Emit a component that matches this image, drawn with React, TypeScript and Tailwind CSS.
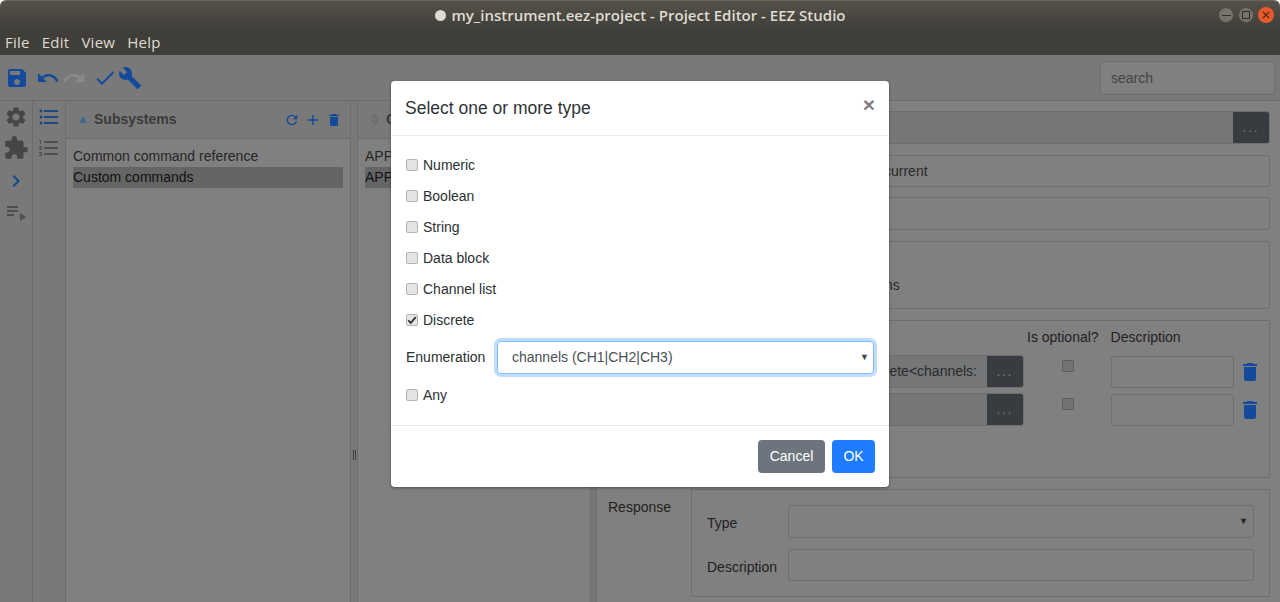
import {
  MdAdd,
  MdBuild,
  MdCheck,
  MdChevronRight,
  MdClose,
  MdDelete,
  MdExtension,
  MdFormatListBulleted,
  MdFormatListNumbered,
  MdPlaylistPlay,
  MdRedo,
  MdRefresh,
  MdSave,
  MdSettings,
  MdUndo,
} from "react-icons/md";

const types = ["Numeric", "Boolean", "String", "Data block", "Channel list"];

const Check = ({ checked = false }: { checked?: boolean }) => (
  <span className="w-[12px] h-[12px] mb-[1px] rounded-[2px] border border-[#b4b4b4] bg-[#e4e4e4] flex items-center justify-center shrink-0">
    {checked && (
      <svg viewBox="0 0 12 12" className="w-[10px] h-[10px] text-[#333]">
        <path d="M1.5 6.5 L4.5 9.5 L10.5 2.5" fill="none" stroke="currentColor" strokeWidth="2.2" />
      </svg>
    )}
  </span>
);

const TypeRow = ({ label, checked, className = "" }: { label: string; checked?: boolean; className?: string }) => (
  <div className={"h-[21px] flex items-center gap-[5px] text-[14px] text-[#2b2f33] " + className}>
    <Check checked={checked} />
    <span>{label}</span>
  </div>
);

const DimInput = ({ className = "", children }: { className?: string; children?: React.ReactNode }) => (
  <div className={"border border-[#6e6e6e] rounded-[3px] flex items-center px-[12px] text-[14px] text-[#2a2a2a] overflow-hidden whitespace-nowrap " + className}>
    {children}
  </div>
);

const PickerInput = ({ className = "", children }: { className?: string; children?: React.ReactNode }) => (
  <div className={"flex rounded-[3px] border border-[#6e6e6e] overflow-hidden " + className}>
    <div className="flex-1 bg-[#747678] flex items-center justify-end pr-[10px] text-[14px] text-[#2a2a2a] whitespace-nowrap overflow-hidden">
      {children}
    </div>
    <div className="w-[36px] bg-[#383b3f] text-[#858585] text-[13px] tracking-[2px] flex items-center justify-center">...</div>
  </div>
);

const ParamRow = ({ value }: { value?: string }) => (
  <div className="flex h-[33px]">
    <PickerInput className="w-[331px] h-[33px]">{value}</PickerInput>
    <div className="w-[87px] flex justify-center pt-[5px]">
      <span className="w-[12px] h-[12px] rounded-[2px] border border-[#5c5c5c] bg-[#737373] block" />
    </div>
    <DimInput className="w-[123px] h-[32px] mt-[1px]" />
    <MdDelete className="text-[#134a9c] w-[24px] h-[24px] ml-[4px] mt-[5px]" />
  </div>
);

const App = () => {
  return (
    <div className="relative w-[1280px] h-[602px] overflow-hidden flex flex-col bg-white font-['Liberation_Sans',sans-serif]">
      {/* Window title + menu */}
      <div className="h-[28px] shrink-0 bg-gradient-to-b from-[#56524a] to-[#403f3a] border-t border-[#6a665d] rounded-t-[6px] flex items-center pt-[1px]">
        <div className="flex-1 flex items-center justify-center gap-[6px] pl-[62px] font-['Open_Sans',sans-serif] font-semibold text-[15px] text-[#dfdbd2]">
          <span className="w-[11px] h-[11px] rounded-full bg-[#dfdbd2]" />
          <span>my_instrument.eez-project - Project Editor - EEZ Studio</span>
        </div>
        <div className="flex items-center gap-[4px] pr-[6px]">
          <span className="w-[16px] h-[16px] rounded-full bg-[#77736c] border border-[#4d4a44] flex items-center justify-center">
            <span className="w-[9px] h-[1px] bg-[#2f2e2a]" />
          </span>
          <span className="w-[16px] h-[16px] rounded-full bg-[#77736c] border border-[#4d4a44] flex items-center justify-center">
            <span className="w-[8px] h-[8px] border border-[#2f2e2a]" />
          </span>
          <span className="w-[16px] h-[16px] rounded-full bg-[#e9592a] flex items-center justify-center">
            <MdClose className="w-[12px] h-[12px] text-[#3a2015]" />
          </span>
        </div>
      </div>
      <div className="h-[27px] shrink-0 bg-[#3f3e39] flex items-center gap-[12px] pl-[5px] pt-[2px] font-['Open_Sans',sans-serif] text-[15px] tracking-[0.25px] text-[#dfdbd2]">
        <span>File</span>
        <span>Edit</span>
        <span>View</span>
        <span>Help</span>
      </div>

      {/* Toolbar */}
      <div className="h-[46px] shrink-0 bg-[#797979] border-b border-[#6d6d6d] flex items-center pl-[5px] pr-[5px]">
        <MdSave className="w-[24px] h-[24px] text-[#134a9c]" />
        <MdUndo className="w-[24px] h-[24px] text-[#134a9c] ml-[7px]" />
        <MdRedo className="w-[24px] h-[24px] text-[#8a8a8a] ml-[2px]" />
        <MdCheck className="w-[24px] h-[24px] text-[#134a9c] ml-[7px]" />
        <MdBuild className="w-[24px] h-[24px] text-[#134a9c] ml-[1px]" />
        <div className="ml-auto w-[175px] h-[34px] rounded-[3px] border border-[#6e6e6e] bg-[#808080] flex items-center pl-[10px] pt-[1px] text-[14px] text-[#444]">
          search
        </div>
      </div>

      <div className="flex-1 flex min-h-0 bg-[#808080]">
        {/* Rails */}
        <div className="w-[33px] shrink-0 bg-[#797979] border-r border-[#6d6d6d] flex flex-col items-center pt-[4px] gap-[6px]">
          <MdSettings className="w-[24px] h-[24px] text-[#464646]" />
          <MdExtension className="w-[26px] h-[26px] text-[#464646]" />
          <MdChevronRight className="w-[24px] h-[24px] text-[#134a8c] mt-[2px]" />
          <MdPlaylistPlay className="w-[24px] h-[24px] text-[#4e4e4e] mt-[1px]" />
        </div>
        <div className="w-[33px] shrink-0 bg-[#797979] border-r border-[#6d6d6d] flex flex-col items-center pt-[4px] gap-[7px]">
          <MdFormatListBulleted className="w-[24px] h-[24px] text-[#1a4a80]" />
          <MdFormatListNumbered className="w-[24px] h-[24px] text-[#505050]" />
        </div>

        {/* Subsystems */}
        <div className="w-[284px] shrink-0 flex flex-col">
          <div className="h-[38px] bg-[#797979] border-b border-[#6d6d6d] flex items-center pl-[13px] pr-[8px]">
            <span className="w-0 h-0 border-x-[4px] border-x-transparent border-b-[7px] border-b-[#41688f]" />
            <span className="ml-[7px] font-bold text-[14px] text-[#3a3a3a]">Subsystems</span>
            <div className="ml-auto flex items-center gap-[4px]">
              <MdRefresh className="w-[16px] h-[16px] text-[#134a9c]" />
              <MdAdd className="w-[18px] h-[18px] text-[#134a9c]" />
              <MdDelete className="w-[16px] h-[16px] text-[#134a9c]" />
            </div>
          </div>
          <div className="pl-[7px] pr-[7px] pt-[7px] text-[14px] text-[#262626] leading-[21px]">
            <div>Common command reference</div>
            <div className="bg-[#656565] text-[#111]">Custom commands</div>
          </div>
        </div>

        {/* Splitter */}
        <div className="w-[8px] shrink-0 bg-[#797979] border-x border-[#6d6d6d] flex items-center justify-center">
          <div className="flex gap-[1px] mt-[207px]">
            <span className="w-[1px] h-[10px] bg-[#3f3f3f]" />
            <span className="w-[1px] h-[10px] bg-[#3f3f3f]" />
          </div>
        </div>

        {/* Commands */}
        <div className="w-[232px] shrink-0 flex flex-col">
          <div className="h-[38px] bg-[#797979] border-b border-[#6d6d6d] flex items-center pl-[13px]">
            <div className="flex flex-col gap-[1px]">
              <span className="w-0 h-0 border-x-[4px] border-x-transparent border-b-[6px] border-b-[#6f6f6f]" />
              <span className="w-0 h-0 border-x-[4px] border-x-transparent border-t-[6px] border-t-[#6f6f6f]" />
            </div>
            <span className="ml-[7px] font-bold text-[14px] text-[#3a3a3a]">Commands</span>
          </div>
          <div className="pl-[7px] pr-[7px] pt-[7px] text-[14px] text-[#262626] leading-[21px]">
            <div>APPLy</div>
            <div className="bg-[#656565] text-[#111]">APPLy?</div>
          </div>
        </div>

        <div className="w-[7px] shrink-0 bg-[#767676] border-x border-[#6d6d6d]" />

        {/* Command form */}
        <div className="flex-1 min-w-0 pt-[10px] pl-[94px] pr-[10px] relative">
          <PickerInput className="h-[33px]" />
          <DimInput className="h-[32px] mt-[11px]">
            <span className="pl-[180px]">current</span>
          </DimInput>
          <DimInput className="h-[33px] mt-[10px]" />
          <DimInput className="h-[68px] mt-[11px] items-end pb-[12px]">
            <span className="pl-[181px]">ns</span>
          </DimInput>
          <div className="h-[158px] mt-[11px] border border-[#6e6e6e] pt-[6px] pl-[10px]">
            <div className="flex text-[14px] text-[#222] h-[21px] leading-[21px]">
              <span className="ml-[325px]">Is optional?</span>
              <span className="ml-[12px]">Description</span>
            </div>
            <div className="flex flex-col gap-[5px] mt-[7px] ml-[-9px]">
              <ParamRow value="discrete<channels:" />
              <ParamRow />
            </div>
          </div>
          <div className="mt-[11px] h-[108px] border border-[#6e6e6e] pt-[15px] pl-[15px] pr-[15px] flex flex-col gap-[11px] text-[14px] text-[#222]">
            <div className="flex items-center h-[33px]">
              <span className="w-[81px] shrink-0 mt-[3px]">Type</span>
              <DimInput className="flex-1 h-[33px] justify-end !pr-[5px]">
                <span className="text-[9px] text-[#222]">▼</span>
              </DimInput>
            </div>
            <div className="flex items-center h-[32px]">
              <span className="w-[81px] shrink-0 mt-[4px]">Description</span>
              <DimInput className="flex-1 h-[32px]" />
            </div>
          </div>
          <span className="absolute left-[11px] top-[396px] text-[14px] text-[#222]">Response</span>
        </div>
      </div>

      {/* Modal */}
      <div className="absolute left-[391px] top-[81px] w-[498px] h-[406px] bg-white rounded-[4px] shadow-[0_1px_3px_rgba(0,0,0,0.4)] flex flex-col">
        <div className="h-[55px] shrink-0 border-b border-[#e9ecef] flex items-center justify-between pl-[14px] pr-[14px]">
          <span className="text-[17.5px] text-[#2f3337]">Select one or more type</span>
          <span className="text-[21px] font-bold leading-none text-[#808080] mb-[8px]">×</span>
        </div>
        <div className="flex-1 pt-[19px] pl-[15px] pr-[15px] flex flex-col gap-[10px]">
          {types.map((t) => (
            <TypeRow key={t} label={t} />
          ))}
          <TypeRow label="Discrete" checked />
          <div className="flex items-center h-[33px] text-[14px] text-[#2b2f33]">
            <span className="w-[91px] shrink-0">Enumeration</span>
            <div className="flex-1 h-[33px] rounded-[4px] border border-[#80bdff] shadow-[0_0_0_3px_rgba(0,123,255,0.25)] flex items-center justify-between pl-[14px] pr-[4px] text-[#495057]">
              <span>channels (CH1|CH2|CH3)</span>
              <span className="text-[9px] text-[#444]">▼</span>
            </div>
          </div>
          <TypeRow label="Any" className="mt-[1px]" />
        </div>
        <div className="h-[62px] shrink-0 border-t border-[#e9ecef] flex items-center justify-end gap-[7px] pr-[14px]">
          <button className="h-[33px] w-[67px] rounded-[4px] bg-[#6c757d] text-white text-[14px]">Cancel</button>
          <button className="h-[33px] w-[43px] rounded-[4px] bg-[#1f7bff] text-white text-[14px]">OK</button>
        </div>
      </div>
    </div>
  );
};

export default App;
